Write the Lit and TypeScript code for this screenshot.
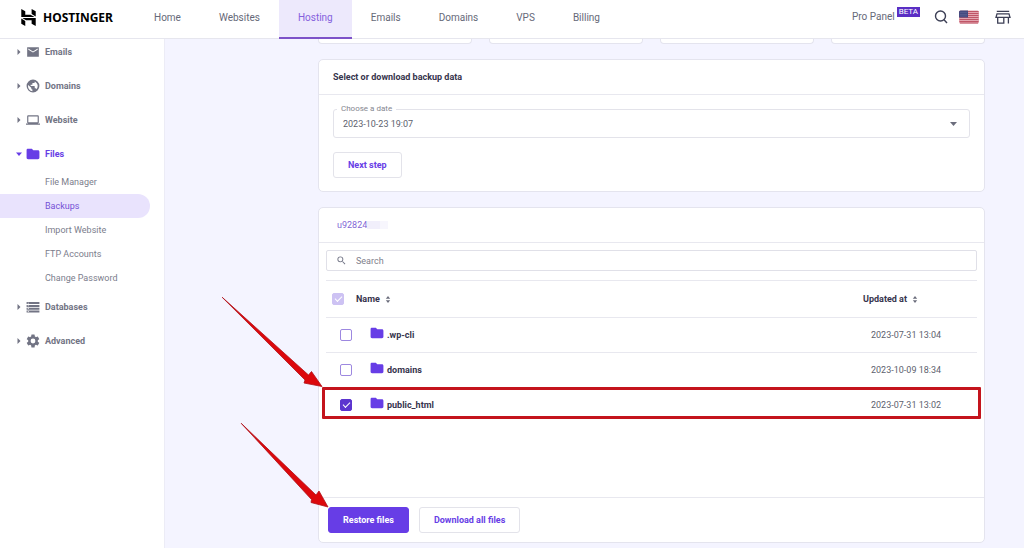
import { LitElement, html, svg, css, nothing } from "lit";
import { customElement, state } from "lit/decorators.js";
import { classMap } from "lit/directives/class-map.js";

interface Entry {
  name: string;
  updated: string;
  checked: boolean;
}

const icons: Record<string, unknown> = {
  mail: svg`<path d="M22 4H2v16h20V4zm-2 4-8 5-8-5V6l8 5 8-5v2z"/>`,
  globe: svg`<path d="M12 1a11 11 0 1 0 0 22 11 11 0 0 0 0-22zm-1 19.930A8.500 8.500 0 0 1 3.500 12c0-.620.080-1.210.210-1.790L9 15v1a2 2 0 0 0 2 2v2.930zm6.900-3.540A2 2 0 0 0 16 16h-1v-3a1 1 0 0 0-1-1H8v-2h2a1 1 0 0 0 1-1V7h2a2 2 0 0 0 2-2v-.910a8.500 8.500 0 0 1 2.900 13.300z"/>`,
  laptop: svg`<path d="M20 18c1.100 0 2-.900 2-2V6c0-1.100-.900-2-2-2H4c-1.100 0-2 .900-2 2v10c0 1.100.900 2 2 2H0v2h24v-2h-4zM4 6h16v10H4V6z"/>`,
  folder: svg`<path d="M10 3H3.500C2 3 1 4 1 5v13.500c0 1.300 1 2.500 2.500 2.500h17c1.500 0 2.500-1.200 2.500-2.500V8c0-1.300-1-2.500-2.500-2.500h-8L10 3z"/>`,
  storage: svg`<path d="M1 3.500h22v3.500H1zM1 8.400h22v3.500H1zM1 13.200h22v3.500H1zM1 18h22v3.500H1z"/><path fill="#fff" d="M3 4.600h2v1.300H3zM3 9.500h2v1.300H3zM3 14.300h2v1.300H3zM3 19.100h2v1.300H3z"/>`,
  gear: svg`<path transform="translate(12 12) scale(1.150) translate(-12 -12)" d="M19.140 12.940c.040-.300.060-.610.060-.940s-.020-.640-.070-.940l2.030-1.580a.49.49 0 0 0 .120-.610l-1.920-3.320a.49.49 0 0 0-.590-.220l-2.390.960a7 7 0 0 0-1.620-.940l-.360-2.540A.48.48 0 0 0 13.920 2.400h-3.840a.48.48 0 0 0-.470.410l-.360 2.540c-.590.240-1.130.570-1.620.940l-2.390-.960a.48.48 0 0 0-.590.220L2.740 8.870a.48.48 0 0 0 .120.610l2.030 1.580c-.050.300-.090.630-.090.940s.020.640.070.940l-2.030 1.580a.49.49 0 0 0-.120.610l1.920 3.320c.120.220.370.290.590.220l2.390-.960c.500.380 1.030.700 1.620.940l.360 2.540c.050.240.240.410.480.410h3.840c.240 0 .440-.170.470-.410l.360-2.540a6.800 6.800 0 0 0 1.620-.940l2.390.960c.220.080.470 0 .590-.220l1.920-3.320a.48.48 0 0 0-.120-.610l-2.010-1.580zM12 15.600a3.600 3.600 0 1 1 0-7.200 3.600 3.600 0 0 1 0 7.200z"/>`,
  search: svg`<path d="M15.500 14h-.790l-.280-.270A6.470 6.470 0 0 0 16 9.500 6.500 6.500 0 1 0 9.500 16c1.610 0 3.090-.590 4.230-1.570l.270.280v.790l5 4.990L20.490 19l-4.990-5zm-6 0a4.500 4.500 0 1 1 0-9 4.500 4.500 0 0 1 0 9z"/>`,
};

const icon = (name: string, cls = "icon") =>
  html`<svg class=${cls} viewBox="0 0 24 24" aria-hidden="true">${icons[name]}</svg>`;

const sortIcon = html`<svg class="sort" viewBox="0 0 6 8" aria-hidden="true">
  <path d="M3 0 5.500 3.200H0.500zM3 8 5.500 4.800H0.500z" />
</svg>`;

@customElement("top-bar")
class TopBar extends LitElement {
  static styles = css`
    :host { display: block; }
    .bar {
      display: flex; align-items: stretch; height: 38px; background: #fff;
      border-bottom: 1px solid #e6e6ee; padding: 0 13px 0 20px;
      font: 400 10px/14px Roboto, Inter, sans-serif; color: #666978;
    }
    .logo {
      display: flex; align-items: center; gap: 6px; width: 115px; padding-bottom: 3px;
      color: #000; text-decoration: none; font: 700 12px/16px "Noto Sans", sans-serif;
    }
    .mark { width: 17px; height: 17px; flex: none; }
    .nav { display: flex; flex: 1; }
    .tab {
      display: flex; align-items: center; padding: 0 19px 3px; height: 35px;
      color: inherit; text-decoration: none;
    }
    .current { color: #8561dc; background: #ede9fc; box-shadow: inset 0 -2px #7d52c8; padding-bottom: 4px; height: 35px; }
    .tools { display: flex; align-items: center; padding-bottom: 4px; }
    .panel { display: flex; align-items: center; gap: 2px; color: inherit; text-decoration: none; white-space: nowrap; margin-right: 14px; }
    .beta {
      align-self: flex-start; background: #5a2fc4; color: #fff; font-size: 8px; line-height: 10px;
      padding: 0 2px; margin-top: -3px;
    }
    .tool { border: 0; padding: 0; background: none; display: flex; margin-right: 11px; }
    .tool:last-child { margin-right: 0; }
    .lens { width: 14px; height: 14px; }
    .flag { width: 20px; height: 14px; }
    .store { width: 16px; height: 16px; margin-left: 5px; }
  `;

  render() {
    const tabs = ["Home", "Websites", "Hosting", "Emails", "Domains", "VPS", "Billing"];
    return html`<header class="bar">
      <a class="logo" href="#">
        <svg class="mark" viewBox="0 0 24 24" aria-hidden="true">
          <path d="M16.415 0v7.160l5.785 3.384V3.006L16.415 0zM1.800 0v11.237h18.815L14.890 8.090l-7.457-.003V3.172L1.800 0zm14.615 20.894v-5.019l-7.514-.005c.007.033-5.820-3.197-5.820-3.197l19.119.091V24l-5.785-3.106zM1.800 13.551v7.343l5.633 2.949v-6.988L1.800 13.551z" />
        </svg>
        <span>HOSTINGER</span>
      </a>
      <nav class="nav">
        ${tabs.map((t) => html`<a class=${classMap({ tab: true, current: t === "Hosting" })} href="#">${t}</a>`)}
      </nav>
      <div class="tools">
        <a class="panel" href="#"><span>Pro Panel</span><span class="beta">BETA</span></a>
        <button class="tool" aria-label="Search">
          <svg class="lens" viewBox="0 0 14 14" fill="none" stroke="#3c3f55" stroke-width="1.400">
            <circle cx="6.500" cy="6" r="5" /><path d="m10 9.700 3 3.300" />
          </svg>
        </button>
        <button class="tool" aria-label="Language">
          <svg class="flag" viewBox="0 0 20 14">
            <rect y="0.500" width="20" height="13" rx="1.500" fill="#e3a5b0" />
            <path stroke="#bf5566" stroke-width="1" d="M0.500 1.500h19M0.500 3.500h19M0.500 5.500h19M0.500 7.500h19M0.500 9.500h19M0.500 11.500h19M1 13h18" />
            <path fill="#454a80" d="M0 2Q0 .5 1.500 .5H9V7.500H0z" />
            <path stroke="#6d71a0" stroke-width=".8" stroke-dasharray="1 1" d="M1.500 2.500h6.500M1.500 4.500h6.500M1.500 6h6.500" />
          </svg>
        </button>
        <button class="tool" aria-label="Store">
          <svg class="store" viewBox="0 0 16 16" fill="none" stroke="#3c3f55" stroke-width="1.300">
            <path d="M1.800 2.300h12.400M2 4.800h12l1 3.600H1zM2.700 8.400v5.800h6.100V8.400M13.400 8.400v6.200" />
          </svg>
        </button>
      </div>
    </header>`;
  }
}

@customElement("side-menu")
class SideMenu extends LitElement {
  static styles = css`
    :host {
      display: block; width: 164px; flex: none; background: #fff; border-right: 1px solid #ececf6;
      font: 400 9px/12px Roboto, Inter, sans-serif; color: #7b7d8c;
    }
    .menu { display: flex; flex-direction: column; gap: 10px; padding-top: 1px; }
    .head {
      display: flex; align-items: center; width: 100%; height: 24px; padding: 0 0 0 16px;
      border: 0; background: none; color: #727484; font: inherit; font-weight: 700;
    }
    .open { color: #673de6; }
    .caret { width: 6px; height: 6px; margin-right: 4px; fill: currentColor; }
    .icon { width: 14px; height: 14px; margin-right: 5px; fill: currentColor; }
    .subs { list-style: none; margin: 4px 0 -5px; padding: 0; }
    .sub {
      display: flex; align-items: center; height: 24px; margin-right: 14px; padding-left: 45px;
      color: inherit; text-decoration: none; border-radius: 0 12px 12px 0;
    }
    .picked { background: #e9e3fd; color: #7551d6; }
  `;

  render() {
    const groups: [string, string, string[]?][] = [
      ["mail", "Emails"],
      ["globe", "Domains"],
      ["laptop", "Website"],
      ["folder", "Files", ["File Manager", "Backups", "Import Website", "FTP Accounts", "Change Password"]],
      ["storage", "Databases"],
      ["gear", "Advanced"],
    ];
    return html`<nav class="menu">
      ${groups.map(
        ([glyph, label, subs]) => html`<div>
          <button class=${classMap({ head: true, open: !!subs })} aria-expanded=${subs ? "true" : "false"}>
            <svg class="caret" viewBox="0 0 6 6" aria-hidden="true">
              <path d=${subs ? "M0 1.500h6L3 5z" : "M1.500 0v6L4.500 3z"} />
            </svg>
            ${icon(glyph)}<span>${label}</span>
          </button>
          ${subs
            ? html`<ul class="subs">
                ${subs.map((s) => html`<li><a class=${classMap({ sub: true, picked: s === "Backups" })} href="#">${s}</a></li>`)}
              </ul>`
            : nothing}
        </div>`,
      )}
    </nav>`;
  }
}

@customElement("app-root")
class AppRoot extends LitElement {
  @state() private entries: Entry[] = [
    { name: ".wp-cli", updated: "2023-07-31 13:04", checked: false },
    { name: "domains", updated: "2023-10-09 18:34", checked: false },
    { name: "public_html", updated: "2023-07-31 13:02", checked: true },
  ];

  static styles = css`
    :host {
      display: block; min-height: 100vh; background: #f4f4ff; color: #36344d;
      font: 400 9px/12px Roboto, Inter, sans-serif;
    }
    .body { display: flex; min-height: calc(100vh - 39px); }
    .main {
      flex: 1; min-width: 0; padding: 0 39px 5px 153px; display: flex; flex-direction: column; gap: 15px;
    }
    .tiles { display: grid; grid-template-columns: repeat(4, 1fr); gap: 17px; }
    .tile { height: 4px; background: #fff; border: 1px solid #e4e4ee; border-top: 0; border-radius: 0 0 4px 4px; }
    .card { position: relative; background: #fff; border: 1px solid #e4e4ee; border-radius: 5px; }
    .title { margin: 0; padding: 0 14px; font-size: 9px; font-weight: 700; line-height: 34px; border-bottom: 1px solid #e8e8ef; }
    .form { padding: 14px 14px 13px; }
    .field { position: relative; margin-bottom: 14px; }
    .caption {
      position: absolute; left: 4px; top: -6px; padding: 0 4px; background: #fff;
      font-size: 8px; line-height: 12px; color: #85868f;
    }
    .date {
      display: block; width: 100%; height: 29px; padding: 0 9px; appearance: none; background: #fff;
      border: 1px solid #e3e3ea; border-radius: 3px; font: inherit; color: #5d5f6e;
    }
    .drop { position: absolute; right: 13px; top: 13px; width: 7px; height: 4px; fill: #6b6d7c; pointer-events: none; }
    .btn {
      height: 26px; padding: 0 14px; background: #fff; border: 1px solid #e3e3ea; border-radius: 3px;
      font: inherit; font-weight: 700; color: #673de6;
    }
    .primary { background: #673de6; border-color: #673de6; color: #fff; }
    .path { display: flex; align-items: center; height: 34px; padding-left: 18px; border-bottom: 1px solid #e8e8ef; color: #8367d6; }
    .mask { width: 21px; height: 8px; background: linear-gradient(90deg, #f1effb 60%, #f7f6fd 60%); }
    .files { padding: 7px; min-height: 240px; }
    .find { display: flex; align-items: center; gap: 9px; height: 19px; padding: 0 9px; border: 1px solid #e0e0e8; border-radius: 2px; margin-bottom: 9px; }
    .lens { width: 11px; height: 11px; fill: #727586; }
    .query { flex: 1; border: 0; outline: 0; padding: 0; font: inherit; color: #36344d; background: none; }
    .query::placeholder { color: #7f808c; opacity: 1; }
    .list { width: 100%; border-collapse: collapse; table-layout: fixed; }
    .pick { width: 30px; }
    .when { width: 114px; }
    .list th, .list td { padding: 0; text-align: left; border-top: 1px solid #e8e8ef; }
    .list th { height: 36px; font-weight: 700; border-bottom: 1px solid #e8e8ef; }
    .list td { height: 34px; }
    .list .all { padding-left: 6px; }
    .list .one { padding-left: 14px; }
    .list .name { padding-left: 14px; font-weight: 700; }
    .list .stamp { padding-left: 8px; color: #5d5f6e; }
    .label { display: flex; align-items: center; gap: 3px; }
    .sorter { display: flex; align-items: center; gap: 5px; border: 0; background: none; padding: 0; font: inherit; color: inherit; }
    .folder { width: 14px; height: 14px; fill: #673de6; margin-bottom: 4px; }
    .sort { width: 6px; height: 7px; fill: #6b6d7c; }
    .box {
      appearance: none; display: grid; place-content: center; width: 12px; height: 12px; margin: 0;
      border: 1px solid #9d88e0; border-radius: 2px; background: #fff;
    }
    .box:checked { background: #5c35cf; border-color: #5c35cf; }
    .box:disabled { background: #cdc2f3; border-color: #cdc2f3; }
    .box:checked::after {
      content: ""; width: 6px; height: 3px; border: solid #fff; border-width: 0 0 1px 1px;
      transform: translateY(-1px) rotate(-45deg);
    }
    .actions { display: flex; gap: 10px; padding: 9px; border-top: 1px solid #e8e8ef; }
    .frame { position: absolute; left: 3px; right: 3px; top: 179px; height: 26px; border: 3px solid #c4141d; border-radius: 1px; }
    .arrows { position: absolute; left: -98px; top: 88px; width: 110px; height: 214px; pointer-events: none; }
  `;

  private toggle(i: number) {
    this.entries = this.entries.map((e, n) => (n === i ? { ...e, checked: !e.checked } : e));
  }

  render() {
    return html`<top-bar></top-bar>
      <div class="body">
        <side-menu></side-menu>
        <main class="main">
          <div class="tiles">${[0, 1, 2, 3].map(() => html`<div class="tile"></div>`)}</div>

          <section class="card">
            <h2 class="title">Select or download backup data</h2>
            <div class="form">
              <div class="field">
                <label class="caption" for="date">Choose a date</label>
                <select class="date" id="date"><option>2023-10-23 19:07</option></select>
                <svg class="drop" viewBox="0 0 7 4" aria-hidden="true"><path d="M0 0h7L3.500 4z" /></svg>
              </div>
              <button class="btn">Next step</button>
            </div>
          </section>

          <section class="card">
            <div class="path"><span>u92824</span><span class="mask"></span></div>
            <div class="files">
              <div class="find">
                ${icon("search", "lens")}
                <input class="query" type="search" placeholder="Search" aria-label="Search" />
              </div>
              <table class="list">
                <colgroup><col class="pick" /><col /><col class="when" /></colgroup>
                <thead>
                  <tr>
                    <th class="all"><input class="box" type="checkbox" aria-label="Select all" checked disabled /></th>
                    <th><button class="sorter">Name ${sortIcon}</button></th>
                    <th><button class="sorter">Updated at ${sortIcon}</button></th>
                  </tr>
                </thead>
                <tbody>
                  ${this.entries.map(
                    (e, i) => html`<tr>
                      <td class="one">
                        <input class="box" type="checkbox" id="f${i}" .checked=${e.checked} @change=${() => this.toggle(i)} />
                      </td>
                      <td class="name"><label class="label" for="f${i}">${icon("folder", "folder")}${e.name}</label></td>
                      <td class="stamp">${e.updated}</td>
                    </tr>`,
                  )}
                </tbody>
              </table>
            </div>
            <div class="actions">
              <button class="btn primary">Restore files</button>
              <button class="btn">Download all files</button>
            </div>
            <div class="frame"></div>
            <svg class="arrows" viewBox="0 0 110 214" aria-hidden="true">
              <path fill="#dc080c" stroke="#b01219" stroke-width=".8" d="M1.200 1.300 84 84 83 87 101 90.500 90.500 75.500 87.500 79z" />
              <path fill="#dc080c" stroke="#b01219" stroke-width=".8" d="M20.200 127.300 90.500 203.500 90 206.500 107 211 98 195 95 199z" />
            </svg>
          </section>
        </main>
      </div>`;
  }
}
